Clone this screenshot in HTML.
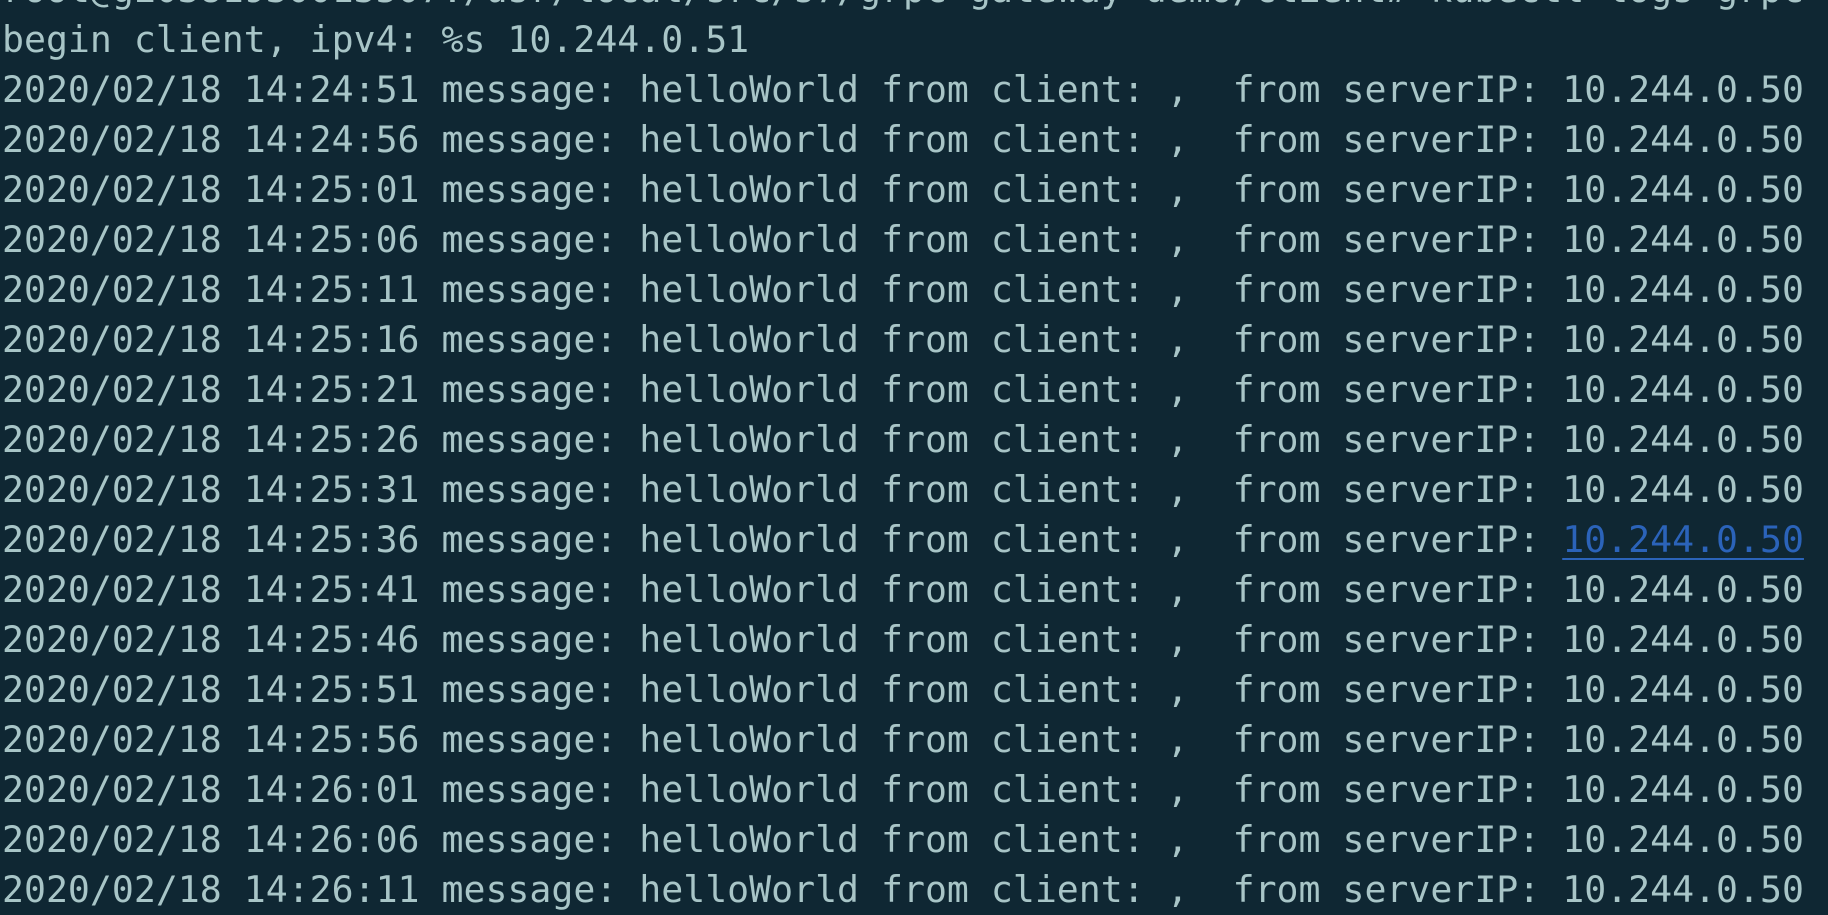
<!DOCTYPE html>
<html><head><meta charset="utf-8"><style>
html,body{margin:0;padding:0;background:#0f2733;width:1828px;height:914px;overflow:hidden}
pre{position:absolute;left:2px;top:-34.6px;margin:0;font-family:"DejaVu Sans Mono","Liberation Mono",monospace;font-size:36.5px;line-height:49.95px;color:#a8c5c7;white-space:pre}
a{color:#2b63b9;text-decoration:underline;text-underline-offset:6px;text-decoration-thickness:2px}
</style></head><body><pre>root@gi0381930013507:/usr/local/src/s7/grpc-gateway-demo/client# kubectl logs grpc-cli
begin client, ipv4: %s 10.244.0.51
2020/02/18 14:24:51 message: helloWorld from client: ,  from serverIP: 10.244.0.50
2020/02/18 14:24:56 message: helloWorld from client: ,  from serverIP: 10.244.0.50
2020/02/18 14:25:01 message: helloWorld from client: ,  from serverIP: 10.244.0.50
2020/02/18 14:25:06 message: helloWorld from client: ,  from serverIP: 10.244.0.50
2020/02/18 14:25:11 message: helloWorld from client: ,  from serverIP: 10.244.0.50
2020/02/18 14:25:16 message: helloWorld from client: ,  from serverIP: 10.244.0.50
2020/02/18 14:25:21 message: helloWorld from client: ,  from serverIP: 10.244.0.50
2020/02/18 14:25:26 message: helloWorld from client: ,  from serverIP: 10.244.0.50
2020/02/18 14:25:31 message: helloWorld from client: ,  from serverIP: 10.244.0.50
2020/02/18 14:25:36 message: helloWorld from client: ,  from serverIP: <a>10.244.0.50</a>
2020/02/18 14:25:41 message: helloWorld from client: ,  from serverIP: 10.244.0.50
2020/02/18 14:25:46 message: helloWorld from client: ,  from serverIP: 10.244.0.50
2020/02/18 14:25:51 message: helloWorld from client: ,  from serverIP: 10.244.0.50
2020/02/18 14:25:56 message: helloWorld from client: ,  from serverIP: 10.244.0.50
2020/02/18 14:26:01 message: helloWorld from client: ,  from serverIP: 10.244.0.50
2020/02/18 14:26:06 message: helloWorld from client: ,  from serverIP: 10.244.0.50
2020/02/18 14:26:11 message: helloWorld from client: ,  from serverIP: 10.244.0.50</pre></body></html>
